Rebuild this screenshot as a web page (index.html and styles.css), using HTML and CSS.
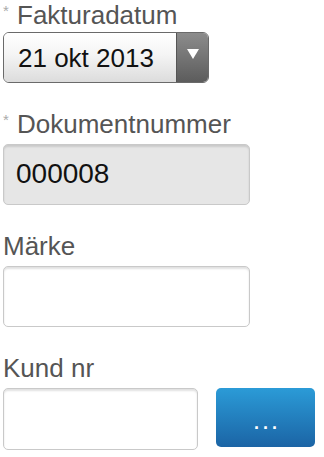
FILE: index.html
```html
<html lang="en">
  <head>
    <meta charset="UTF-8" />
    <meta name="viewport" content="width=device-width, initial-scale=1.0" />
    <title>Faktura</title>
    <link rel="stylesheet" href="styles.css">
  </head>
  <body>
    <form class="form">
      <div class="field">
        <label class="label"><span class="req">*</span>Fakturadatum</label>
        <div class="select">
          <div class="select-value">21 okt 2013</div>
          <div class="select-arrow">
            <svg width="14" height="12" viewBox="0 0 14 12"><path d="M1 1 L13 1 L7 11 Z" fill="#fff"/></svg>
          </div>
        </div>
      </div>

      <div class="field">
        <label class="label"><span class="req">*</span>Dokumentnummer</label>
        <div class="input input-readonly">000008</div>
      </div>

      <div class="field">
        <label class="label">Märke</label>
        <div class="input"></div>
      </div>

      <div class="field">
        <label class="label">Kund nr</label>
        <div class="row">
          <div class="input input-short"></div>
          <div class="btn">...</div>
        </div>
      </div>
    </form>
  </body>
</html>
```

FILE: styles.css
```css
*,
*::after,
*::before {
  margin: 0;
  padding: 0;
  box-sizing: border-box;
}

:root {
  --font: "Liberation Sans", Arial, sans-serif;
  --label-color: #555;
  --border: #c9c9c9;
}

body {
  font-family: var(--font);
  background: #fff;
  padding: 0 0 0 3px;
  width: 324px;
  height: 457px;
  overflow: hidden;
}

.field {
  margin-bottom: 26px;
}

.label {
  display: block;
  font-size: 26px;
  line-height: 30px;
  color: var(--label-color);
  margin-bottom: 5px;
}

.field:first-child .label {
  margin-bottom: 2px;
}

.req {
  display: inline-block;
  width: 14px;
  font-size: 15px;
  color: #aaa;
  vertical-align: top;
  line-height: 22px;
}

.select {
  display: flex;
  width: 206px;
  height: 51px;
  border: 1px solid #6a6a6a;
  border-radius: 6px;
  overflow: hidden;
}

.select-value {
  flex: 1;
  display: flex;
  align-items: center;
  padding-left: 14px;
  padding-top: 2px;
  font-size: 26px;
  color: #111;
  background: linear-gradient(#ffffff, #f4f4f4 45%, #dcdcdc);
}

.select-arrow {
  width: 32px;
  display: flex;
  align-items: center;
  justify-content: center;
  padding-bottom: 8px;
  border-left: 1px solid #555;
  background: linear-gradient(#8c8c8c, #5c5c5c);
}

.input {
  width: 247px;
  height: 61px;
  border: 1px solid var(--border);
  border-radius: 5px;
  background: #fff;
  box-shadow: inset 0 2px 2px rgba(0, 0, 0, 0.12);
  font-size: 28px;
  color: #111;
  display: flex;
  align-items: center;
  padding-left: 12px;
  padding-bottom: 1px;
}

.input-readonly {
  background: #e6e6e6;
}

.row {
  display: flex;
  align-items: flex-start;
  gap: 18px;
}

.input-short {
  width: 195px;
  height: 62px;
}

.btn {
  width: 99px;
  height: 59px;
  border-radius: 5px;
  background: linear-gradient(#2b9bd7, #1b64a5);
  color: #fff;
  font-weight: bold;
  font-size: 18px;
  letter-spacing: 4px;
  display: flex;
  align-items: center;
  justify-content: center;
  padding-left: 4px;
  padding-top: 12px;
}
```
